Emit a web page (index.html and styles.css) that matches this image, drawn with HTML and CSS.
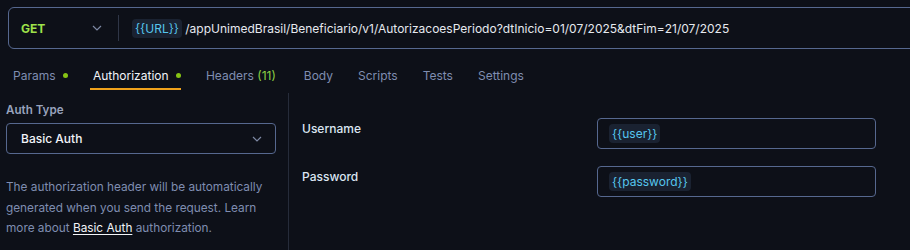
FILE: index.html
```html
<!DOCTYPE html>
<html>
<head>
<meta charset="utf-8">
<link rel="stylesheet" href="styles.css">
</head>
<body>
<div class="page">
  <div class="urlbar">
    <div class="method">GET</div>
    <svg class="chev" width="10" height="6" viewBox="0 0 10 6"><path d="M1 1l4 4 4-4" fill="none" stroke="#7d88a3" stroke-width="1.2"/></svg>
    <div class="vsep"></div>
    <div class="url"><span class="var">{{URL}}</span> /appUnimedBrasil/Beneficiario/v1/AutorizacoesPeriodo?dtInicio=01/07/2025&amp;dtFim=21/07/2025</div>
  </div>
  <div class="tabs">
    <div class="tab">Params <span class="dot"></span></div>
    <div class="tab active">Authorization <span class="dot"></span></div>
    <div class="tab">Headers <span class="count">(11)</span></div>
    <div class="tab">Body</div>
    <div class="tab">Scripts</div>
    <div class="tab">Tests</div>
    <div class="tab">Settings</div>
  </div>
  <div class="content">
    <div class="left">
      <div class="label">Auth Type</div>
      <div class="select">
        <span>Basic Auth</span>
        <svg width="10" height="6" viewBox="0 0 10 6"><path d="M1 1l4 4 4-4" fill="none" stroke="#7d88a3" stroke-width="1.2"/></svg>
      </div>
      <p class="desc">The authorization header will be automatically generated when you send the request. Learn more about <a class="link">Basic Auth</a> authorization.</p>
    </div>
    <div class="right">
      <div class="row">
        <div class="flabel">Username</div>
        <div class="input"><span class="var">{{user}}</span></div>
      </div>
      <div class="row">
        <div class="flabel">Password</div>
        <div class="input"><span class="var">{{password}}</span></div>
      </div>
    </div>
  </div>
</div>
</body>
</html>
```
FILE: styles.css
```css
html, body {
  margin: 0;
  padding: 0;
  background: #0d1018;
}
body {
  font-family: Inter, "Noto Sans", sans-serif;
  color: #e4e8ef;
  width: 910px;
  height: 250px;
  overflow: hidden;
}
.page {
  width: 910px;
}
.urlbar {
  margin: 7px -20px 0 8px;
  height: 40px;
  border: 1px solid #56688f;
  border-radius: 6px;
  display: flex;
  align-items: center;
  font-size: 12px;
}
.method {
  color: #9ee24a;
  font-weight: 700;
  font-size: 12px;
  padding-left: 12px;
  width: 71px;
}
.chev {
  margin-right: 16px;
}
.vsep {
  width: 1px;
  height: 26px;
  background: #2f3647;
  margin-right: 13px;
}
.url {
  color: #e6e9ef;
  white-space: nowrap;
}
.var {
  color: #56c6ee;
  background: #1a2231;
  border-radius: 4px;
  padding: 2px 3px;
  font-size: 12px;
}
.tabs {
  display: flex;
  height: 42px;
  padding-left: 13px;
}
.tab {
  font-size: 12px;
  color: #7f8db0;
  display: flex;
  align-items: center;
  height: 42px;
  box-sizing: border-box;
  padding-top: 10px;
  margin-right: 25px;
  position: relative;
  white-space: pre;
}
.tab .dot {
  width: 5px;
  height: 5px;
  border-radius: 50%;
  background: #86c414;
  margin-left: 4px;
  display: inline-block;
}
.tab.active {
  color: #f2f4f8;
}
.tab.active::after {
  content: "";
  position: absolute;
  left: -3px;
  right: 0;
  bottom: 1px;
  height: 2px;
  background: #f0a21c;
}
.count {
  color: #8ed043;
  margin-right: 3px;
}
.content {
  display: flex;
  height: 160px;
}
.left {
  width: 282px;
  padding-left: 6px;
  border-right: 1px solid #262c3a;
  margin-top: 2px;
}
.label {
  font-size: 11.6px;
  font-weight: 600;
  color: #98a3bd;
  margin-top: 9px;
  line-height: 16px;
}
.select {
  width: 270px;
  height: 31px;
  box-sizing: border-box;
  border: 1px solid #56688f;
  border-radius: 4px;
  margin-top: 5px;
  display: flex;
  align-items: center;
  justify-content: space-between;
  padding: 0 13px 0 14px;
  font-size: 12px;
  font-weight: 500;
  color: #f2f4f8;
}
.desc {
  margin: 23px 0 0 0;
  font-size: 11.8px;
  line-height: 20.5px;
  color: #7f8db0;
  width: 272px;
}
.link {
  color: #f2f4f8;
  text-decoration: underline;
  text-underline-offset: 2px;
}
.right {
  padding-left: 13px;
  padding-top: 27px;
}
.row {
  display: flex;
  align-items: flex-start;
  margin-bottom: 17px;
}
.flabel {
  width: 295px;
  font-size: 12px;
  font-weight: 500;
  color: #dbe6f2;
  line-height: 16px;
  padding-top: 3px;
}
.input {
  width: 279px;
  height: 31px;
  box-sizing: border-box;
  border: 1px solid #56688f;
  border-radius: 4px;
  display: flex;
  align-items: center;
  padding-left: 11px;
  font-size: 12px;
}
```
